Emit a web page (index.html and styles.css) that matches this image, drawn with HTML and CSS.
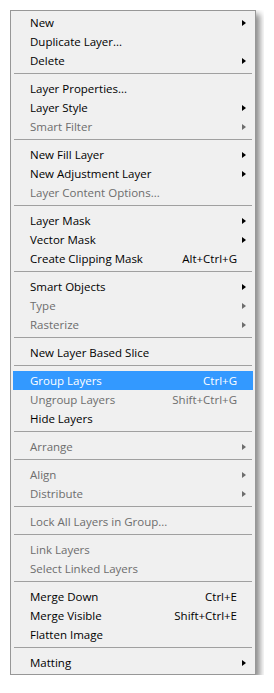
FILE: index.html
```html
<!DOCTYPE html>
<html lang="en">
<head>
  <meta charset="UTF-8" />
  <title>Layer Menu</title>
  <link rel="stylesheet" href="styles.css">
</head>
<body>
  <div class="menu">
    <div class="item"><span>New</span><i class="arrow"></i></div>
    <div class="item"><span>Duplicate Layer...</span></div>
    <div class="item"><span>Delete</span><i class="arrow"></i></div>
    <div class="sep"></div>
    <div class="item"><span>Layer Properties...</span></div>
    <div class="item"><span>Layer Style</span><i class="arrow"></i></div>
    <div class="item disabled"><span>Smart Filter</span><i class="arrow"></i></div>
    <div class="sep"></div>
    <div class="item"><span>New Fill Layer</span><i class="arrow"></i></div>
    <div class="item"><span>New Adjustment Layer</span><i class="arrow"></i></div>
    <div class="item disabled"><span>Layer Content Options...</span></div>
    <div class="sep"></div>
    <div class="item"><span>Layer Mask</span><i class="arrow"></i></div>
    <div class="item"><span>Vector Mask</span><i class="arrow"></i></div>
    <div class="item"><span>Create Clipping Mask</span><span class="key">Alt+Ctrl+G</span></div>
    <div class="sep"></div>
    <div class="item"><span>Smart Objects</span><i class="arrow"></i></div>
    <div class="item disabled"><span>Type</span><i class="arrow"></i></div>
    <div class="item disabled"><span>Rasterize</span><i class="arrow"></i></div>
    <div class="sep"></div>
    <div class="item"><span>New Layer Based Slice</span></div>
    <div class="sep"></div>
    <div class="item active"><span>Group Layers</span><span class="key">Ctrl+G</span></div>
    <div class="item disabled"><span>Ungroup Layers</span><span class="key">Shift+Ctrl+G</span></div>
    <div class="item"><span>Hide Layers</span></div>
    <div class="sep"></div>
    <div class="item disabled"><span>Arrange</span><i class="arrow"></i></div>
    <div class="sep"></div>
    <div class="item disabled"><span>Align</span><i class="arrow"></i></div>
    <div class="item disabled"><span>Distribute</span><i class="arrow"></i></div>
    <div class="sep"></div>
    <div class="item disabled"><span>Lock All Layers in Group...</span></div>
    <div class="sep"></div>
    <div class="item disabled"><span>Link Layers</span></div>
    <div class="item disabled"><span>Select Linked Layers</span></div>
    <div class="sep"></div>
    <div class="item"><span>Merge Down</span><span class="key">Ctrl+E</span></div>
    <div class="item"><span>Merge Visible</span><span class="key">Shift+Ctrl+E</span></div>
    <div class="item"><span>Flatten Image</span></div>
    <div class="sep"></div>
    <div class="item"><span>Matting</span><i class="arrow"></i></div>
  </div>
</body>
</html>
```
FILE: styles.css
```css
body {
  margin: 10px;
  background: #ffffff;
  font-family: "Open Sans", "Noto Sans", sans-serif;
  font-size: 11.5px;
  color: #000000;
}
.menu {
  width: 244px;
  padding: 2px 0;
  background: #f0f0f0;
  border: 1px solid #979797;
  box-shadow: 4px 4px 6px rgba(0, 0, 0, 0.45);
}
.item {
  position: relative;
  display: flex;
  align-items: center;
  height: 19px;
  margin: 0 2px;
  padding: 1px 16px 0 17px;
  box-sizing: border-box;
  line-height: 18px;
  white-space: nowrap;
}
.item .key {
  margin-left: auto;
}
.item.disabled {
  color: #6d6d6d;
}
.item.active {
  background: #3399ff;
  color: #ffffff;
}
/* submenu triangle */
.arrow {
  position: absolute;
  right: 7px;
  top: 7px;
  width: 0;
  height: 0;
  border-top: 3.5px solid transparent;
  border-bottom: 3.5px solid transparent;
  border-left: 4px solid #000000;
}
.disabled .arrow {
  border-left-color: #6d6d6d;
}
.sep {
  height: 9px;
  margin: 0 3px 0 3px;
  background: linear-gradient(#a0a0a0, #a0a0a0) no-repeat 0 3px / 100% 1px;
}
```
